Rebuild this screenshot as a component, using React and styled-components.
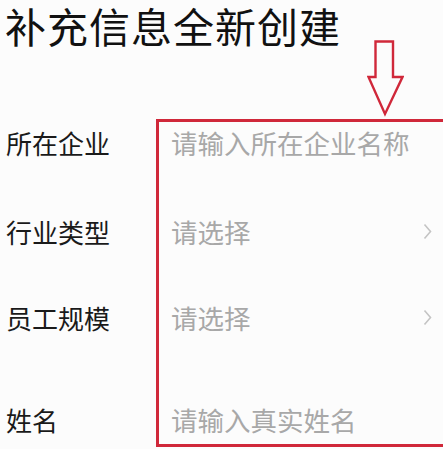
import React from 'react'
import styled, { createGlobalStyle } from 'styled-components'

const GlobalStyle = createGlobalStyle`
    html, body {
        margin: 0;
        padding: 0;
        background: #fcfcfc;
        overflow: hidden;
    }
    body {
        font-family: "Noto Sans CJK SC", "Noto Sans", sans-serif;
    }
`

const rows = [
    { label: '所在企业', placeholder: '请输入所在企业名称', top: 0 },
    { label: '行业类型', placeholder: '请选择', select: true, top: 49 },
    { label: '员工规模', placeholder: '请选择', select: true, top: 46 },
    { label: '姓名', placeholder: '请输入真实姓名', top: 62 },
]

export default function App() {
    return (
        <Page>
            <GlobalStyle />
            <Title>补充信息全新创建</Title>
            <ArrowRow>
                <svg width="37" height="79" viewBox="0 0 37 79">
                    <path
                        d="M8.5 1.5 H26 V37 H35.5 L18 74 L1.5 37 H8.5 Z"
                        fill="none"
                        stroke="#d0283a"
                        strokeWidth="2.4"
                    />
                </svg>
            </ArrowRow>
            <Form>
                <Labels>
                    {rows.map(r => (
                        <Cell key={r.label} $top={r.top}>
                            <Label>{r.label}</Label>
                        </Cell>
                    ))}
                </Labels>
                <Fields>
                    {rows.map(r => (
                        <Cell key={r.label} $top={r.top}>
                            <Placeholder>{r.placeholder}</Placeholder>
                            {r.select ? (
                                <svg width="9" height="17" viewBox="0 0 9 17">
                                    <path d="M1.5 1.5 L7.5 8.5 L1.5 15.5" fill="none" stroke="#c4c4c4" strokeWidth="1.6" />
                                </svg>
                            ) : null}
                        </Cell>
                    ))}
                </Fields>
            </Form>
        </Page>
    )
}

const Page = styled.div`
    width: 443px;
    height: 449px;
    overflow: hidden;
`

const Title = styled.h1`
    margin: 0;
    padding-left: 5px;
    font-size: 41px;
    line-height: 50px;
    font-weight: 400;
    color: #111;
    letter-spacing: 1px;
    white-space: nowrap;
`

const ArrowRow = styled.div`
    display: flex;
    margin-top: -10px;
    padding-left: 367px;
    height: 79px;
`

const Form = styled.div`
    display: flex;
    align-items: flex-start;
`

const Labels = styled.div`
    width: 156px;
    flex-shrink: 0;
    display: flex;
    flex-direction: column;
    padding: 3px 0 0 6px;
    box-sizing: border-box;
`

const Fields = styled.div`
    width: 300px;
    flex-shrink: 0;
    display: flex;
    flex-direction: column;
    border: 3px solid #d0283a;
    padding: 0 21px 5px 12px;
    box-sizing: border-box;
`

const Cell = styled.div`
    height: 40px;
    margin-top: ${props => props.$top}px;
    display: flex;
    align-items: center;
    justify-content: space-between;
`

const Label = styled.span`
    font-size: 26px;
    color: #1a1a1a;
    white-space: nowrap;
`

const Placeholder = styled.span`
    font-size: 26.5px;
    color: #a8a8a8;
    white-space: nowrap;
`
